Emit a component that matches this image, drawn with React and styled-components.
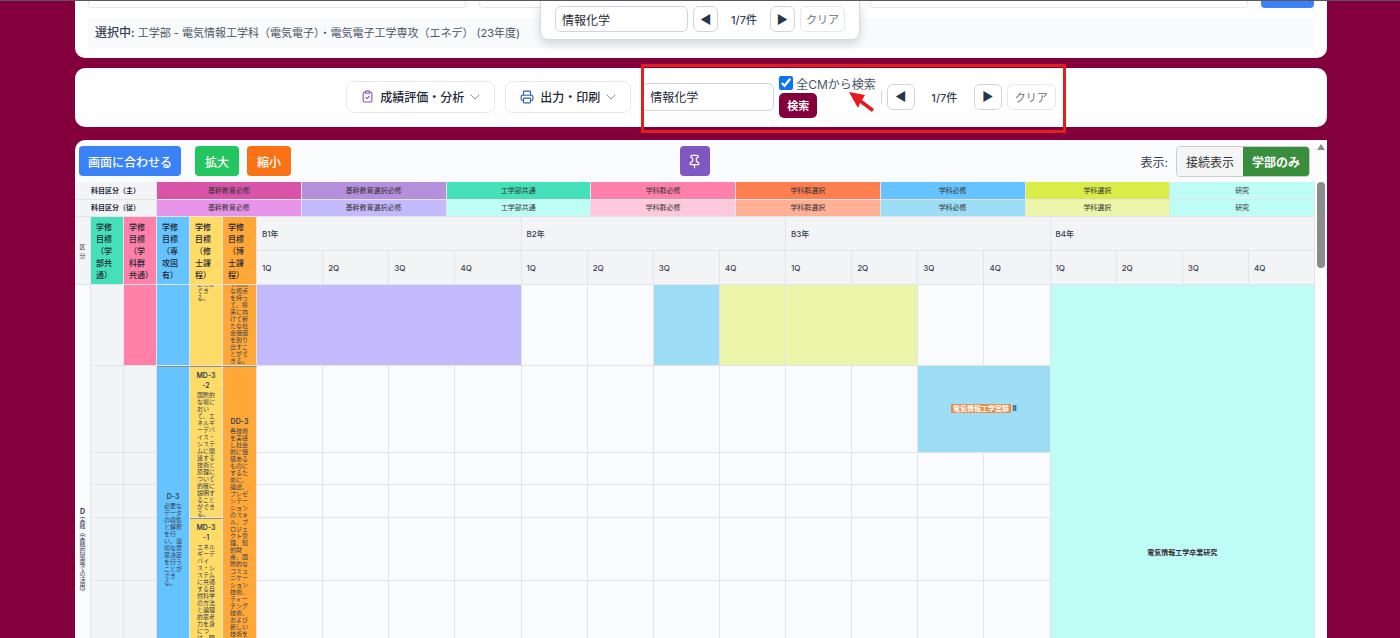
import React from 'react'
import styled, { createGlobalStyle } from 'styled-components'
import { ClipboardCheck, Printer, Pin } from 'lucide-react'

const legendColumns = [
    { main: '基幹教育必修', color: '#d854a8', sub: '基幹教育必修', subColor: '#e893ea' },
    { main: '基幹教育選択必修', color: '#b48fdc', sub: '基幹教育選択必修', subColor: '#c5b9fd' },
    { main: '工学部共通', color: '#45dfb9', sub: '工学部共通', subColor: '#bdfdf5' },
    { main: '学科群必修', color: '#ff80a8', sub: '学科群必修', subColor: '#ffc9dc' },
    { main: '学科群選択', color: '#ff7f50', sub: '学科群選択', subColor: '#ffb095' },
    { main: '学科必修', color: '#65c3ff', sub: '学科必修', subColor: '#9dddf5' },
    { main: '学科選択', color: '#d9ec48', sub: '学科選択', subColor: '#ecf5a9' },
    { main: '研究', color: '#bdfdf5', sub: '研究', subColor: '#bdfdf5' },
]

const goals = [
    { name: '学修目標（学部共通）', color: '#45dfb9' },
    { name: '学修目標（学科群共通）', color: '#ff80a8' },
    { name: '学修目標（専攻固有）', color: '#65c3ff' },
    { name: '学修目標（修士課程）', color: '#ffdc68' },
    { name: '学修目標（博士課程）', color: '#ffa737' },
]

const years = ['B1年', 'B2年', 'B3年', 'B4年']
const quarters = ['1Q', '2Q', '3Q', '4Q']

const emptyCells = (count) => Array.from({ length: count }, (_, i) => <Slot key={i} />)

function Chevron() {
    return (
        <svg width="10" height="6" viewBox="0 0 10 6" fill="none" stroke="#8a929e" aria-hidden="true">
            <path d="M1 1 L5 5 L9 1" strokeLinecap="round" strokeLinejoin="round" />
        </svg>
    )
}

function SearchPopup() {
    return (
        <Popup>
            <SearchInput type="text" aria-label="検索語" defaultValue="情報化学" />
            <StepButton aria-label="前へ">◀</StepButton>
            <Count>1/7件</Count>
            <StepButton aria-label="次へ">▶</StepButton>
            <ClearButton>クリア</ClearButton>
        </Popup>
    )
}

function Filters() {
    return (
        <FilterCard>
            <FilterRow>
                <FilterBox />
                <FilterBox />
                <FilterBox />
                <FilterSubmit aria-label="表示" />
            </FilterRow>
            <Selected>
                <b>選択中:</b> 工学部 - 電気情報工学科（電気電子）・電気電子工学専攻（エネデ） (23年度)
            </Selected>
        </FilterCard>
    )
}

function Toolbar() {
    return (
        <ToolCard>
            <MenuButton>
                <ClipboardCheck size={13} color="#7e4fc4" />
                <span>成績評価・分析</span>
                <Chevron />
            </MenuButton>
            <MenuButton>
                <Printer size={14} color="#3560b8" />
                <span>出力・印刷</span>
                <Chevron />
            </MenuButton>
            <SearchGroup>
                <SearchInput type="text" aria-label="科目検索" defaultValue="情報化学" $tall />
                <SearchOptions>
                    <CheckLabel>
                        <input type="checkbox" defaultChecked />
                        <span>全CMから検索</span>
                    </CheckLabel>
                    <SearchButton>検索</SearchButton>
                </SearchOptions>
                <Divider />
                <StepButton aria-label="前へ" $wide>◀</StepButton>
                <Count $wide>1/7件</Count>
                <StepButton aria-label="次へ" $wide>▶</StepButton>
                <ClearButton $wide>クリア</ClearButton>
                <Highlight />
                <Arrow viewBox="0 0 26 20" aria-hidden="true">
                    <path d="M0 0 L16 3 L13 8 L25 17 L23 20 L11 11 L9 16 Z" fill="#e8191c" />
                </Arrow>
            </SearchGroup>
        </ToolCard>
    )
}

function Legend() {
    return (
        <Table>
            <colgroup>
                <Col $w={82} />
                {legendColumns.map((c) => <col key={c.main} />)}
            </colgroup>
            <tbody>
                <Row $h={18}>
                    <LegendHead scope="row">科目区分（主）</LegendHead>
                    {legendColumns.map((c) => <LegendCell key={c.main} $bg={c.color}>{c.main}</LegendCell>)}
                </Row>
                <Row $h={17}>
                    <LegendHead scope="row">科目区分（従）</LegendHead>
                    {legendColumns.map((c) => <LegendCell key={c.main} $bg={c.subColor}>{c.sub}</LegendCell>)}
                </Row>
            </tbody>
        </Table>
    )
}

function CurriculumMap() {
    return (
        <Table>
            <colgroup>
                <Col $w={16} />
                <Col $w={33} />
                <Col $w={33} />
                <Col $w={33} />
                <Col $w={33} />
                <Col $w={34} />
                {years.map((y) => quarters.map((q) => <col key={y + q} />))}
            </colgroup>
            <thead>
                <Row $h={34}>
                    <KindHead rowSpan={2}>区<br />分</KindHead>
                    {goals.map((g) => <GoalHead key={g.name} rowSpan={2} $bg={g.color}>{g.name}</GoalHead>)}
                    {years.map((y) => <TermHead key={y} colSpan={4}>{y}</TermHead>)}
                </Row>
                <Row $h={34}>
                    {years.map((y) => quarters.map((q) => <TermHead key={y + q}>{q}</TermHead>))}
                </Row>
            </thead>
            <tbody>
                <Row $h={81}>
                    <KindCell rowSpan={6}>
                        <b>D</b>
                        <span>実践（実践的場面での活用）</span>
                    </KindCell>
                    <GoalCell />
                    <GoalCell $bg="#ff80a8" />
                    <GoalCell $bg="#65c3ff" />
                    <GoalCell $bg="#ffdc68">
                        <Clip $bottom={64}>ことができる。</Clip>
                    </GoalCell>
                    <GoalCell $bg="#ffa737">
                        <Clip $bottom={1}>学際的な視点を持って、将来に向けて新たな社会価値を創り出すことができる。</Clip>
                    </GoalCell>
                    <Subject colSpan={4} $bg="#c5b9fd" />
                    {emptyCells(2)}
                    <Subject $bg="#9dddf5" />
                    <Subject $bg="#ecf5a9" />
                    <Subject colSpan={2} $bg="#ecf5a9" />
                    {emptyCells(2)}
                    <Subject colSpan={4} rowSpan={6} $bg="#bdfdf5">
                        <Research>電気情報工学卒業研究</Research>
                    </Subject>
                </Row>
                <Row $h={87}>
                    <GoalCell />
                    <GoalCell />
                    <GoalCell rowSpan={5} $bg="#65c3ff" $line $top={125}>
                        <b>D-3</b>
                        必要なデータの収集と解釈を行い、適切な意思決定を行うことができる。
                    </GoalCell>
                    <GoalCell rowSpan={3} $bg="#ffdc68" $line $top={4}>
                        <b>MD-3-2</b>
                        国際的な場において、エネルギーデバイス・システムに関連する技術と原理について的確に説明することができる。
                    </GoalCell>
                    <GoalCell rowSpan={5} $bg="#ffa737" $line $top={50}>
                        <b>DD-3</b>
                        各技術を実感し社会的に価値あるものにするために、論述、プレゼンテーションのスキル、プロジェクト管理、知的財産、国際的なコミュニケーション技術、ティーチング技術、および新しい技術を企画し実行する。
                    </GoalCell>
                    {emptyCells(10)}
                    <Subject colSpan={2} $bg="#9dddf5">
                        <mark>電気情報工学実験</mark> Ⅱ
                    </Subject>
                </Row>
                <Row $h={32}>
                    <GoalCell />
                    <GoalCell />
                    {emptyCells(12)}
                </Row>
                <Row $h={33}>
                    <GoalCell />
                    <GoalCell />
                    {emptyCells(12)}
                </Row>
                <Row $h={63}>
                    <GoalCell />
                    <GoalCell />
                    <GoalCell rowSpan={2} $bg="#ffdc68" $line $top={4}>
                        <b>MD-3-1</b>
                        エネルギーデバイス・システムに共通する自然科学の方法と論理的思考力を身につけ、問題解決に活用することができる。
                    </GoalCell>
                    {emptyCells(12)}
                </Row>
                <Row $h={240}>
                    <GoalCell />
                    <GoalCell />
                    {emptyCells(12)}
                </Row>
            </tbody>
        </Table>
    )
}

function App() {
    return (
        <Page>
            <GlobalStyle />
            <SearchPopup />
            <Filters />
            <Toolbar />
            <ChartCard>
                <ChartMain>
                    <ChartBar>
                        <BarSide>
                            <ColorButton $bg="#3b82f6" $apart>画面に合わせる</ColorButton>
                            <ColorButton $bg="#22c55e">拡大</ColorButton>
                            <ColorButton $bg="#f97316">縮小</ColorButton>
                        </BarSide>
                        <PinButton aria-label="固定"><Pin size={15} /></PinButton>
                        <BarSide $end>
                            <span>表示:</span>
                            <Toggle>
                                <ToggleButton>接続表示</ToggleButton>
                                <ToggleButton $active>学部のみ</ToggleButton>
                            </Toggle>
                        </BarSide>
                    </ChartBar>
                    <Legend />
                    <CurriculumMap />
                </ChartMain>
                <ScrollTrack>
                    <ScrollUp />
                    <ScrollThumb />
                </ScrollTrack>
            </ChartCard>
        </Page>
    )
}

export default App

const GlobalStyle = createGlobalStyle`
*{
    box-sizing:border-box;
}
body{
    margin:0;
    background:#84003c;
    overflow:hidden;
}
body, button, input{
    font-family:Inter, "Noto Sans CJK JP", sans-serif;
    font-size:12px;
    color:#374151;
}
button{
    padding:0;
    cursor:pointer;
}
`

const Page = styled.div`
height:100vh;
overflow:hidden;
position:relative;
display:flex;
flex-direction:column;
border-top:1px solid #5c5560;
padding:0 73px 0 75px;
`

const Popup = styled.div`
position:absolute;
z-index:5;
top:0;
left:50%;
transform:translateX(-50%);
width:320px;
height:39px;
display:flex;
align-items:center;
gap:5px;
padding:0 14px 2px;
background:white;
border:1px solid #d5d9e0;
border-top:none;
border-radius:0 0 8px 8px;
box-shadow:0 4px 10px rgba(0,0,0,0.15);
`

const SearchInput = styled.input`
width:133px;
height:${p => p.$tall ? 28 : 26}px;
padding:0 ${p => p.$tall ? 8 : 6}px;
border:1px solid #d1d5db;
border-radius:6px;
background:white;
color:#1f2937;
`

const StepButton = styled.button`
width:${p => p.$wide ? 28 : 26}px;
height:26px;
display:flex;
align-items:center;
justify-content:center;
border:1px solid #d1d5db;
border-radius:6px;
background:white;
color:#27364a;
`

const Count = styled.span`
width:${p => p.$wide ? 49 : 42}px;
text-align:center;
font-size:11px;
font-weight:500;
`

const ClearButton = styled.button`
width:${p => p.$wide ? 49 : 46}px;
height:26px;
border:1px solid #e5e7eb;
border-radius:6px;
background:white;
color:#6b7280;
font-size:11px;
`

const FilterCard = styled.section`
flex:none;
padding:0 13px 10px;
background:white;
border-radius:0 0 10px 10px;
`

const FilterRow = styled.div`
display:flex;
gap:13px;
`

const FilterBox = styled.div`
flex:1;
height:7px;
border:1px solid #e5e7eb;
border-top:none;
border-radius:0 0 4px 4px;
`

const FilterSubmit = styled.button`
width:53px;
height:7px;
border:none;
border-radius:0 0 4px 4px;
background:#3b82f6;
`

const Selected = styled.div`
margin-top:10px;
padding:0 7px;
font-size:11px;
line-height:30px;
background:#f8fafc;
color:#4b5563;
white-space:nowrap;

b{
    font-size:12px;
    font-weight:500;
    color:#374151;
}
`

const ToolCard = styled.section`
flex:none;
display:flex;
align-items:center;
justify-content:center;
gap:10px;
height:59px;
margin-top:10px;
padding-bottom:2px;
background:white;
border-radius:10px;
`

const MenuButton = styled.button`
display:flex;
align-items:center;
gap:6px;
height:32px;
padding:0 14px;
border:1px solid #e5e7eb;
border-radius:8px;
background:white;
color:#1f2937;
font-weight:500;
`

const SearchGroup = styled.div`
position:relative;
display:flex;
align-items:center;
gap:5px;
`

const SearchOptions = styled.div`
display:flex;
flex-direction:column;
align-items:flex-start;
gap:2px;
`

const CheckLabel = styled.label`
display:flex;
align-items:center;
gap:3px;
height:15px;
color:#4b5563;

input{
    width:14px;
    height:14px;
    margin:0;
    accent-color:#0b74f5;
}
`

const SearchButton = styled.button`
width:38px;
height:25px;
border:none;
border-radius:5px;
background:#84003c;
color:white;
font-size:11px;
font-weight:700;
`

const Divider = styled.div`
width:1px;
height:14px;
background:#d1d5db;
`

const Highlight = styled.div`
position:absolute;
inset:-12px -10px -15px 0;
border:3px solid #e0201f;
pointer-events:none;
`

const Arrow = styled.svg`
position:absolute;
left:208px;
top:16px;
width:26px;
height:20px;
`

const ChartCard = styled.section`
flex:1;
min-height:0;
display:flex;
margin-top:13px;
overflow:hidden;
background:#fafbfd;
border-radius:10px 0 0 0;
`

const ChartMain = styled.div`
flex:1;
min-width:0;
`

const ChartBar = styled.div`
display:grid;
grid-template-columns:1fr auto 1fr;
align-items:center;
height:42px;
padding:0 5px 0 4px;
`

const BarSide = styled.div`
display:flex;
align-items:center;
justify-content:${p => p.$end ? 'flex-end' : 'flex-start'};
gap:8px;
`

const ColorButton = styled.button`
height:30px;
padding:0 ${p => p.$apart ? 9 : 10}px;
margin-right:${p => p.$apart ? 6 : 0}px;
border:none;
border-radius:4px;
background:${p => p.$bg};
color:white;
font-weight:500;
`

const PinButton = styled.button`
width:30px;
height:30px;
display:flex;
align-items:center;
justify-content:center;
border:none;
border-radius:4px;
background:#7e57c2;
color:white;
`

const Toggle = styled.div`
display:flex;
overflow:hidden;
border:1px solid #ccc;
border-radius:4px;
`

const ToggleButton = styled.button`
width:66px;
height:29px;
border:none;
background:${p => p.$active ? '#388e3c' : '#f5f5f5'};
color:${p => p.$active ? 'white' : '#333'};
font-weight:${p => p.$active ? 700 : 400};
`

const Table = styled.table`
width:100%;
table-layout:fixed;
border-collapse:separate;
border-spacing:0;

th, td{
    padding:0;
    border-right:1px solid #e2e4e9;
    border-bottom:1px solid #e2e4e9;
}
`

const Col = styled.col`
width:${p => p.$w}px;
`

const Row = styled.tr`
height:${p => p.$h}px;
`

const LegendHead = styled.th`
background:#f3f4f6;
font-size:7px;
line-height:10px;
font-weight:600;
color:#1f2937;
`

const LegendCell = styled.td`
background:${p => p.$bg};
font-size:7px;
line-height:10px;
text-align:center;
color:#333;
`

const KindHead = styled.th`
background:#f3f4f6;
font-size:6px;
line-height:9px;
font-weight:400;
`

const GoalHead = styled.th`
&&{
    padding:0 6px 0 5px;
}
background:${p => p.$bg};
font-size:8px;
line-height:12px;
font-weight:500;
text-align:left;
color:#1f2937;
`

const TermHead = styled.th`
&&{
    padding-left:5px;
}
background:#f3f4f6;
font-size:8px;
line-height:12px;
font-weight:500;
text-align:left;
`

const KindCell = styled.td`
&&{
    padding-top:222px;
}
vertical-align:top;
font-size:6px;

b{
    display:block;
    font-size:7px;
    line-height:10px;
    text-align:center;
}
span{
    display:block;
    width:15px;
    line-height:15px;
    writing-mode:vertical-rl;
    white-space:nowrap;
}
`

const GoalCell = styled.td`
&&{
    padding:${p => p.$top || 0}px 7px 0;
    ${p => p.$line && 'border-top:1px solid #8b8f86;'}
}
background:${p => p.$bg || '#f3f4f6'};
vertical-align:top;
font-size:6px;
line-height:7px;
word-break:break-all;

b{
    display:block;
    margin:0 -2px;
    font-size:7px;
    line-height:10px;
    font-weight:600;
    text-align:center;
}
`

const Clip = styled.div`
display:flex;
flex-direction:column;
justify-content:flex-end;
height:80px;
padding-bottom:${p => p.$bottom}px;
overflow:hidden;
`

const Slot = styled.td`
background:#fafbfd;
`

const Subject = styled.td`
background:${p => p.$bg};
font-size:7px;
line-height:10px;
font-weight:600;
text-align:center;
color:#1f2937;

mark{
    background:#ed8b45;
    color:white;
    font-weight:700;
    padding:0 2px;
}
`

const Research = styled.span`
text-shadow:0 0 1px white;
`

const ScrollTrack = styled.div`
width:12px;
display:flex;
flex-direction:column;
align-items:center;
gap:32px;
padding-top:4px;
background:#fcfcfc;
`

const ScrollUp = styled.div`
border:4px solid transparent;
border-top:none;
border-bottom:6px solid #8b8b8b;
`

const ScrollThumb = styled.div`
width:8px;
height:86px;
border-radius:4px;
background:#8b8b8b;
`
